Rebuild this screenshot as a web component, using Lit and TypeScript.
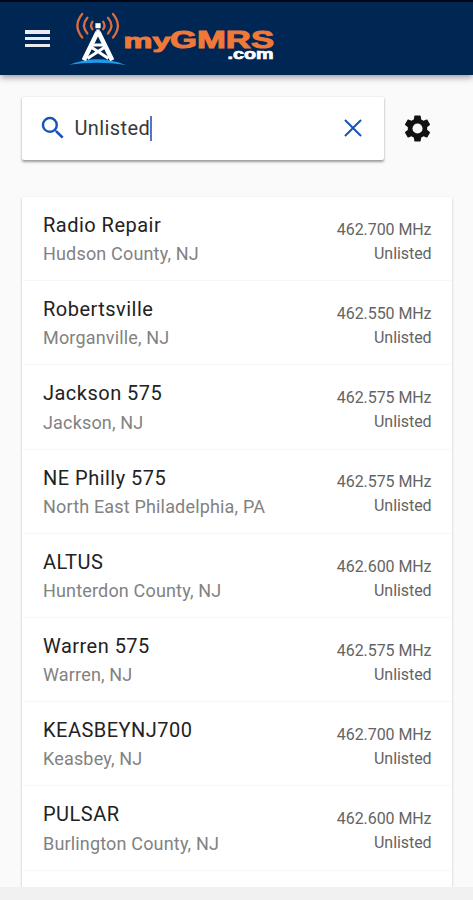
import { LitElement, html, css } from "lit";
import { customElement, property } from "lit/decorators.js";

interface Repeater {
  name: string;
  place: string;
  frequency: string;
}

const repeaters: Repeater[] = [
  { name: "Radio Repair", place: "Hudson County, NJ", frequency: "462.700 MHz" },
  { name: "Robertsville", place: "Morganville, NJ", frequency: "462.550 MHz" },
  { name: "Jackson 575", place: "Jackson, NJ", frequency: "462.575 MHz" },
  { name: "NE Philly 575", place: "North East Philadelphia, PA", frequency: "462.575 MHz" },
  { name: "ALTUS", place: "Hunterdon County, NJ", frequency: "462.600 MHz" },
  { name: "Warren 575", place: "Warren, NJ", frequency: "462.575 MHz" },
  { name: "KEASBEYNJ700", place: "Keasbey, NJ", frequency: "462.700 MHz" },
  { name: "PULSAR", place: "Burlington County, NJ", frequency: "462.600 MHz" },
];

@customElement("app-header")
export class AppHeader extends LitElement {
  static styles = css`
    :host {
      display: flex;
      flex: none;
      box-sizing: border-box;
      height: 75px;
      background: #002654;
      border-top: 2px solid #000814;
      box-shadow: 0 2px 7px rgba(0, 0, 0, 0.42);
      z-index: 1;
    }
    .menu {
      display: flex;
      flex-direction: column;
      gap: 3.2px;
      margin: 28.4px 0 0 25px;
      width: 25px;
    }
    .bar {
      height: 3.4px;
      background: #ececf0;
    }
    .logo {
      display: block;
      margin-left: 10px;
      width: 220px;
      height: 66px;
      font-family: "Liberation Sans", Arial, sans-serif;
      font-weight: 700;
    }
  `;

  render() {
    return html`
      <div class="menu">
        <div class="bar"></div>
        <div class="bar"></div>
        <div class="bar"></div>
      </div>
      <svg class="logo" viewBox="60 2 220 66">
        <path d="M69 64.8 Q97 53.5 126 65 Q97 60.5 69 64.8Z" fill="#1b9be8" />
        <g fill="none" stroke="#d96d40" stroke-width="2.3" stroke-linecap="round">
          <path d="M82.2 14 Q72.6 25.5 82.2 37.5" />
          <path d="M87.4 17.8 Q80.6 25.5 87.4 33.5" />
          <path d="M92.4 21.8 Q89.8 25.5 92.4 29.2" />
          <path d="M113 14 Q122.8 25.5 113 37.5" />
          <path d="M108 17.8 Q114.8 25.5 108 33.5" />
          <path d="M103.2 21.8 Q105.8 25.5 103.2 29.2" />
        </g>
        <rect x="95.4" y="23.2" width="5.2" height="5" fill="#fff" />
        <g fill="none" stroke="#fff">
          <path d="M98 29.5 V34" stroke-width="3.4" />
          <path d="M97.6 32 L83.8 60.2 M98.4 32 L112.2 60.2" stroke-width="4.6" />
          <path d="M92 45 H104 M91 47 L108.5 58.5 M105 47 L87.5 58.5" stroke-width="3" />
        </g>
        <g fill="#f07838" stroke="#f07838" stroke-width="1">
          <text x="123.6" y="48" font-size="21" textLength="47" lengthAdjust="spacingAndGlyphs">my</text>
          <text x="170" y="48" font-size="24" textLength="104" lengthAdjust="spacingAndGlyphs">GMRS</text>
        </g>
        <text x="227.5" y="58.6" font-size="14.5" textLength="46" lengthAdjust="spacingAndGlyphs" fill="#fff" stroke="#fff" stroke-width="0.7">.com</text>
      </svg>
    `;
  }
}

@customElement("search-bar")
export class SearchBar extends LitElement {
  @property() value = "";

  static styles = css`
    :host {
      display: flex;
      align-items: center;
      margin: 22px 0 0 22px;
    }
    .field {
      display: flex;
      align-items: center;
      box-sizing: border-box;
      width: 362px;
      height: 62.5px;
      padding: 0 17.5px 0 16px;
      background: #fff;
      border-radius: 2px;
      box-shadow: 0 1.5px 2.5px rgba(0, 0, 0, 0.38);
    }
    .icon {
      display: block;
      flex: none;
      width: 30px;
      height: 30px;
    }
    .search {
      fill: #1754b8;
    }
    .text {
      margin-left: 6.5px;
      font-size: 20px;
      line-height: 26px;
      letter-spacing: 0.4px;
      color: #383838;
    }
    .caret {
      width: 1.4px;
      height: 25px;
      background: #5b71c4;
    }
    .clear {
      width: 28px;
      height: 28px;
      margin-left: auto;
      fill: #1754b8;
    }
    .settings {
      width: 31px;
      height: 31px;
      margin-left: 18px;
      fill: #111214;
    }
  `;

  render() {
    return html`
      <div class="field">
        <svg class="icon search" viewBox="0 0 24 24">
          <path d="M15.5 14h-.79l-.28-.27A6.471 6.471 0 0 0 16 9.5 6.5 6.5 0 1 0 9.5 16c1.61 0 3.09-.59 4.23-1.57l.27.28v.79l5 4.99L20.49 19l-4.99-5zm-6 0C7.01 14 5 11.99 5 9.5S7.01 5 9.5 5 14 7.01 14 9.5 11.99 14 9.5 14z" />
        </svg>
        <span class="text">${this.value}</span>
        <span class="caret"></span>
        <svg class="icon clear" viewBox="0 0 24 24">
          <path d="M19.5 5.7 18.3 4.5 12 10.8 5.7 4.5 4.5 5.7 10.8 12 4.5 18.3 5.7 19.5 12 13.2 18.3 19.5 19.5 18.3 13.2 12z" />
        </svg>
      </div>
      <svg class="icon settings" viewBox="0 0 24 24">
        <path d="M19.43 12.98c.04-.32.07-.64.07-.98s-.03-.66-.07-.98l2.11-1.65c.19-.15.24-.42.12-.64l-2-3.46c-.12-.22-.39-.3-.61-.22l-2.49 1c-.52-.4-1.08-.73-1.69-.98l-.38-2.65C14.46 2.18 14.25 2 14 2h-4c-.25 0-.46.18-.49.42l-.38 2.65c-.61.25-1.17.59-1.69.98l-2.49-1c-.23-.09-.49 0-.61.22l-2 3.46c-.13.22-.07.49.12.64l2.11 1.65c-.04.32-.07.65-.07.98s.03.66.07.98l-2.11 1.65c-.19.15-.24.42-.12.64l2 3.46c.12.22.39.3.61.22l2.49-1c.52.4 1.08.73 1.69.98l.38 2.65c.03.24.24.42.49.42h4c.25 0 .46-.18.49-.42l.38-2.65c.61-.25 1.17-.59 1.69-.98l2.49 1c.23.09.49 0 .61-.22l2-3.46c.12-.22.07-.49-.12-.64l-2.11-1.65zM12 15.9a3.9 3.9 0 1 1 0-7.8 3.9 3.9 0 0 1 0 7.8z" />
      </svg>
    `;
  }
}

@customElement("repeater-row")
export class RepeaterRow extends LitElement {
  @property({ attribute: false }) item!: Repeater;

  static styles = css`
    :host {
      display: flex;
      justify-content: space-between;
      box-sizing: border-box;
      height: 84.2px;
      padding: 14px 20.5px 0 21px;
      border-bottom: 1px solid #f7f7f7;
      white-space: nowrap;
    }
    .name {
      font-size: 20px;
      line-height: 28px;
      letter-spacing: 0.48px;
      color: #222;
    }
    .place {
      margin-top: 1.3px;
      font-size: 18px;
      line-height: 28px;
      letter-spacing: 0.17px;
      color: #828282;
    }
    .status {
      padding-top: 6.8px;
      text-align: right;
      font-size: 16px;
      line-height: 24px;
      letter-spacing: -0.07px;
      color: #646464;
    }
  `;

  render() {
    return html`
      <div>
        <div class="name">${this.item.name}</div>
        <div class="place">${this.item.place}</div>
      </div>
      <div class="status">
        <div>${this.item.frequency}</div>
        <div>Unlisted</div>
      </div>
    `;
  }
}

@customElement("app-root")
export class AppRoot extends LitElement {
  static styles = css`
    :host {
      display: flex;
      flex-direction: column;
      box-sizing: border-box;
      height: 900px;
      overflow: hidden;
      background: #fafafa;
      font-family: Roboto, "Liberation Sans", sans-serif;
    }
    .list {
      flex: 1;
      min-height: 0;
      margin: 37.5px 21px 0 22px;
      background: #fff;
      border-radius: 2px 2px 0 0;
      box-shadow: 0 1px 2.5px rgba(0, 0, 0, 0.26);
    }
    .footer {
      flex: none;
      height: 13px;
      background: #f1f1f1;
      z-index: 1;
    }
  `;

  render() {
    return html`
      <app-header></app-header>
      <search-bar value="Unlisted"></search-bar>
      <div class="list">
        ${repeaters.map((item) => html`<repeater-row .item=${item}></repeater-row>`)}
      </div>
      <div class="footer"></div>
    `;
  }
}
